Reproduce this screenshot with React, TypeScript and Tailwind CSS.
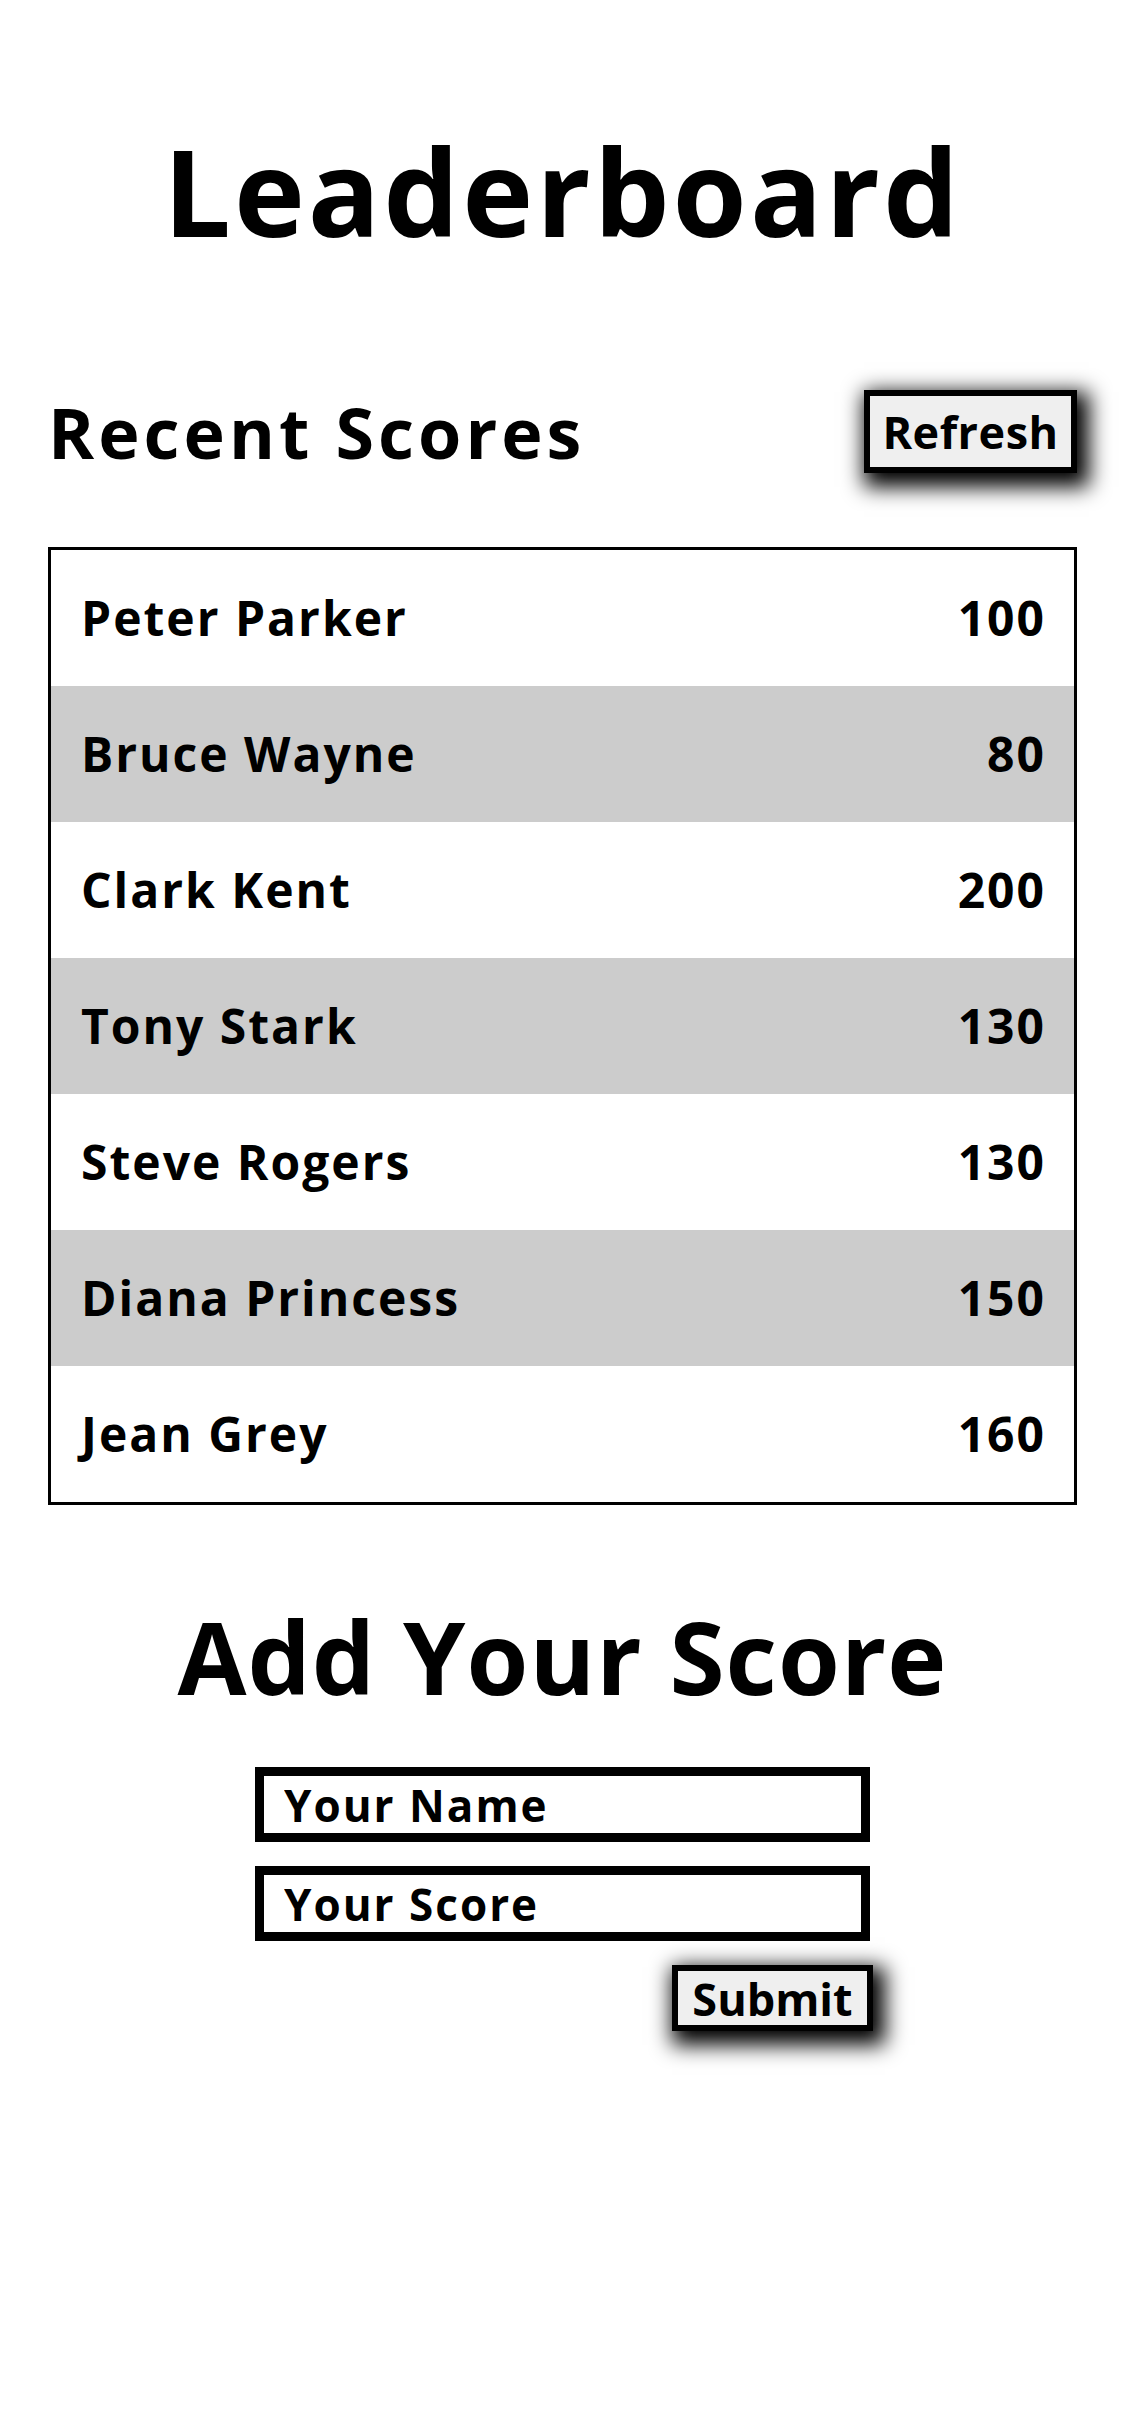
const scores = [
  { name: "Peter Parker", score: 100 },
  { name: "Bruce Wayne", score: 80 },
  { name: "Clark Kent", score: 200 },
  { name: "Tony Stark", score: 130 },
  { name: "Steve Rogers", score: 130 },
  { name: "Diana Princess", score: 150 },
  { name: "Jean Grey", score: 160 },
]

export default function App() {
  return (
    <div className="min-h-[2436px] bg-white px-12 text-black font-['Open_Sans',sans-serif] font-bold">
      <h1 className="pt-[131px] text-center text-[120px] leading-none tracking-[3px]">Leaderboard</h1>

      <div className="mt-[139px] flex h-[83px] items-center justify-between">
        <h2 className="text-[70px] leading-none tracking-[4px]">Recent Scores</h2>
        <button className="h-[83px] w-[213px] border-[6px] border-black bg-[#efefef] text-[45px] leading-none tracking-[0.5px] shadow-[6px_8px_20px_6px_#000]">
          Refresh
        </button>
      </div>

      <div className="mt-[74px] border-[3px] border-black">
        {scores.map((s, i) => (
          <div
            key={s.name}
            className={`flex h-[136px] items-center justify-between px-[30px] text-[48px] leading-none tracking-[2px] ${i % 2 === 1 ? "bg-[#cccccc]" : "bg-white"}`}
          >
            <span>{s.name}</span>
            <span className="-mr-[2px]">{s.score}</span>
          </div>
        ))}
      </div>

      <h2 className="mt-[101px] text-center text-[100px] leading-none tracking-[1px]">Add Your Score</h2>

      <form className="mx-auto mt-[61px] flex w-[615px] flex-col gap-6" onSubmit={e => e.preventDefault()}>
        <input
          placeholder="Your Name"
          className="h-[75px] w-full border-[9px] border-black bg-white pl-[20px] text-[44px] font-bold tracking-[2px] outline-none placeholder:text-black placeholder:opacity-100"
        />
        <input
          placeholder="Your Score"
          className="h-[75px] w-full border-[9px] border-black bg-white pl-[20px] text-[44px] font-bold tracking-[2px] outline-none placeholder:text-black placeholder:opacity-100"
        />
        <button className="mr-[-3px] h-[66px] w-[201px] self-end border-[6px] border-black bg-[#efefef] text-[45px] leading-none shadow-[6px_8px_20px_6px_#000]">
          Submit
        </button>
      </form>
    </div>
  )
}
